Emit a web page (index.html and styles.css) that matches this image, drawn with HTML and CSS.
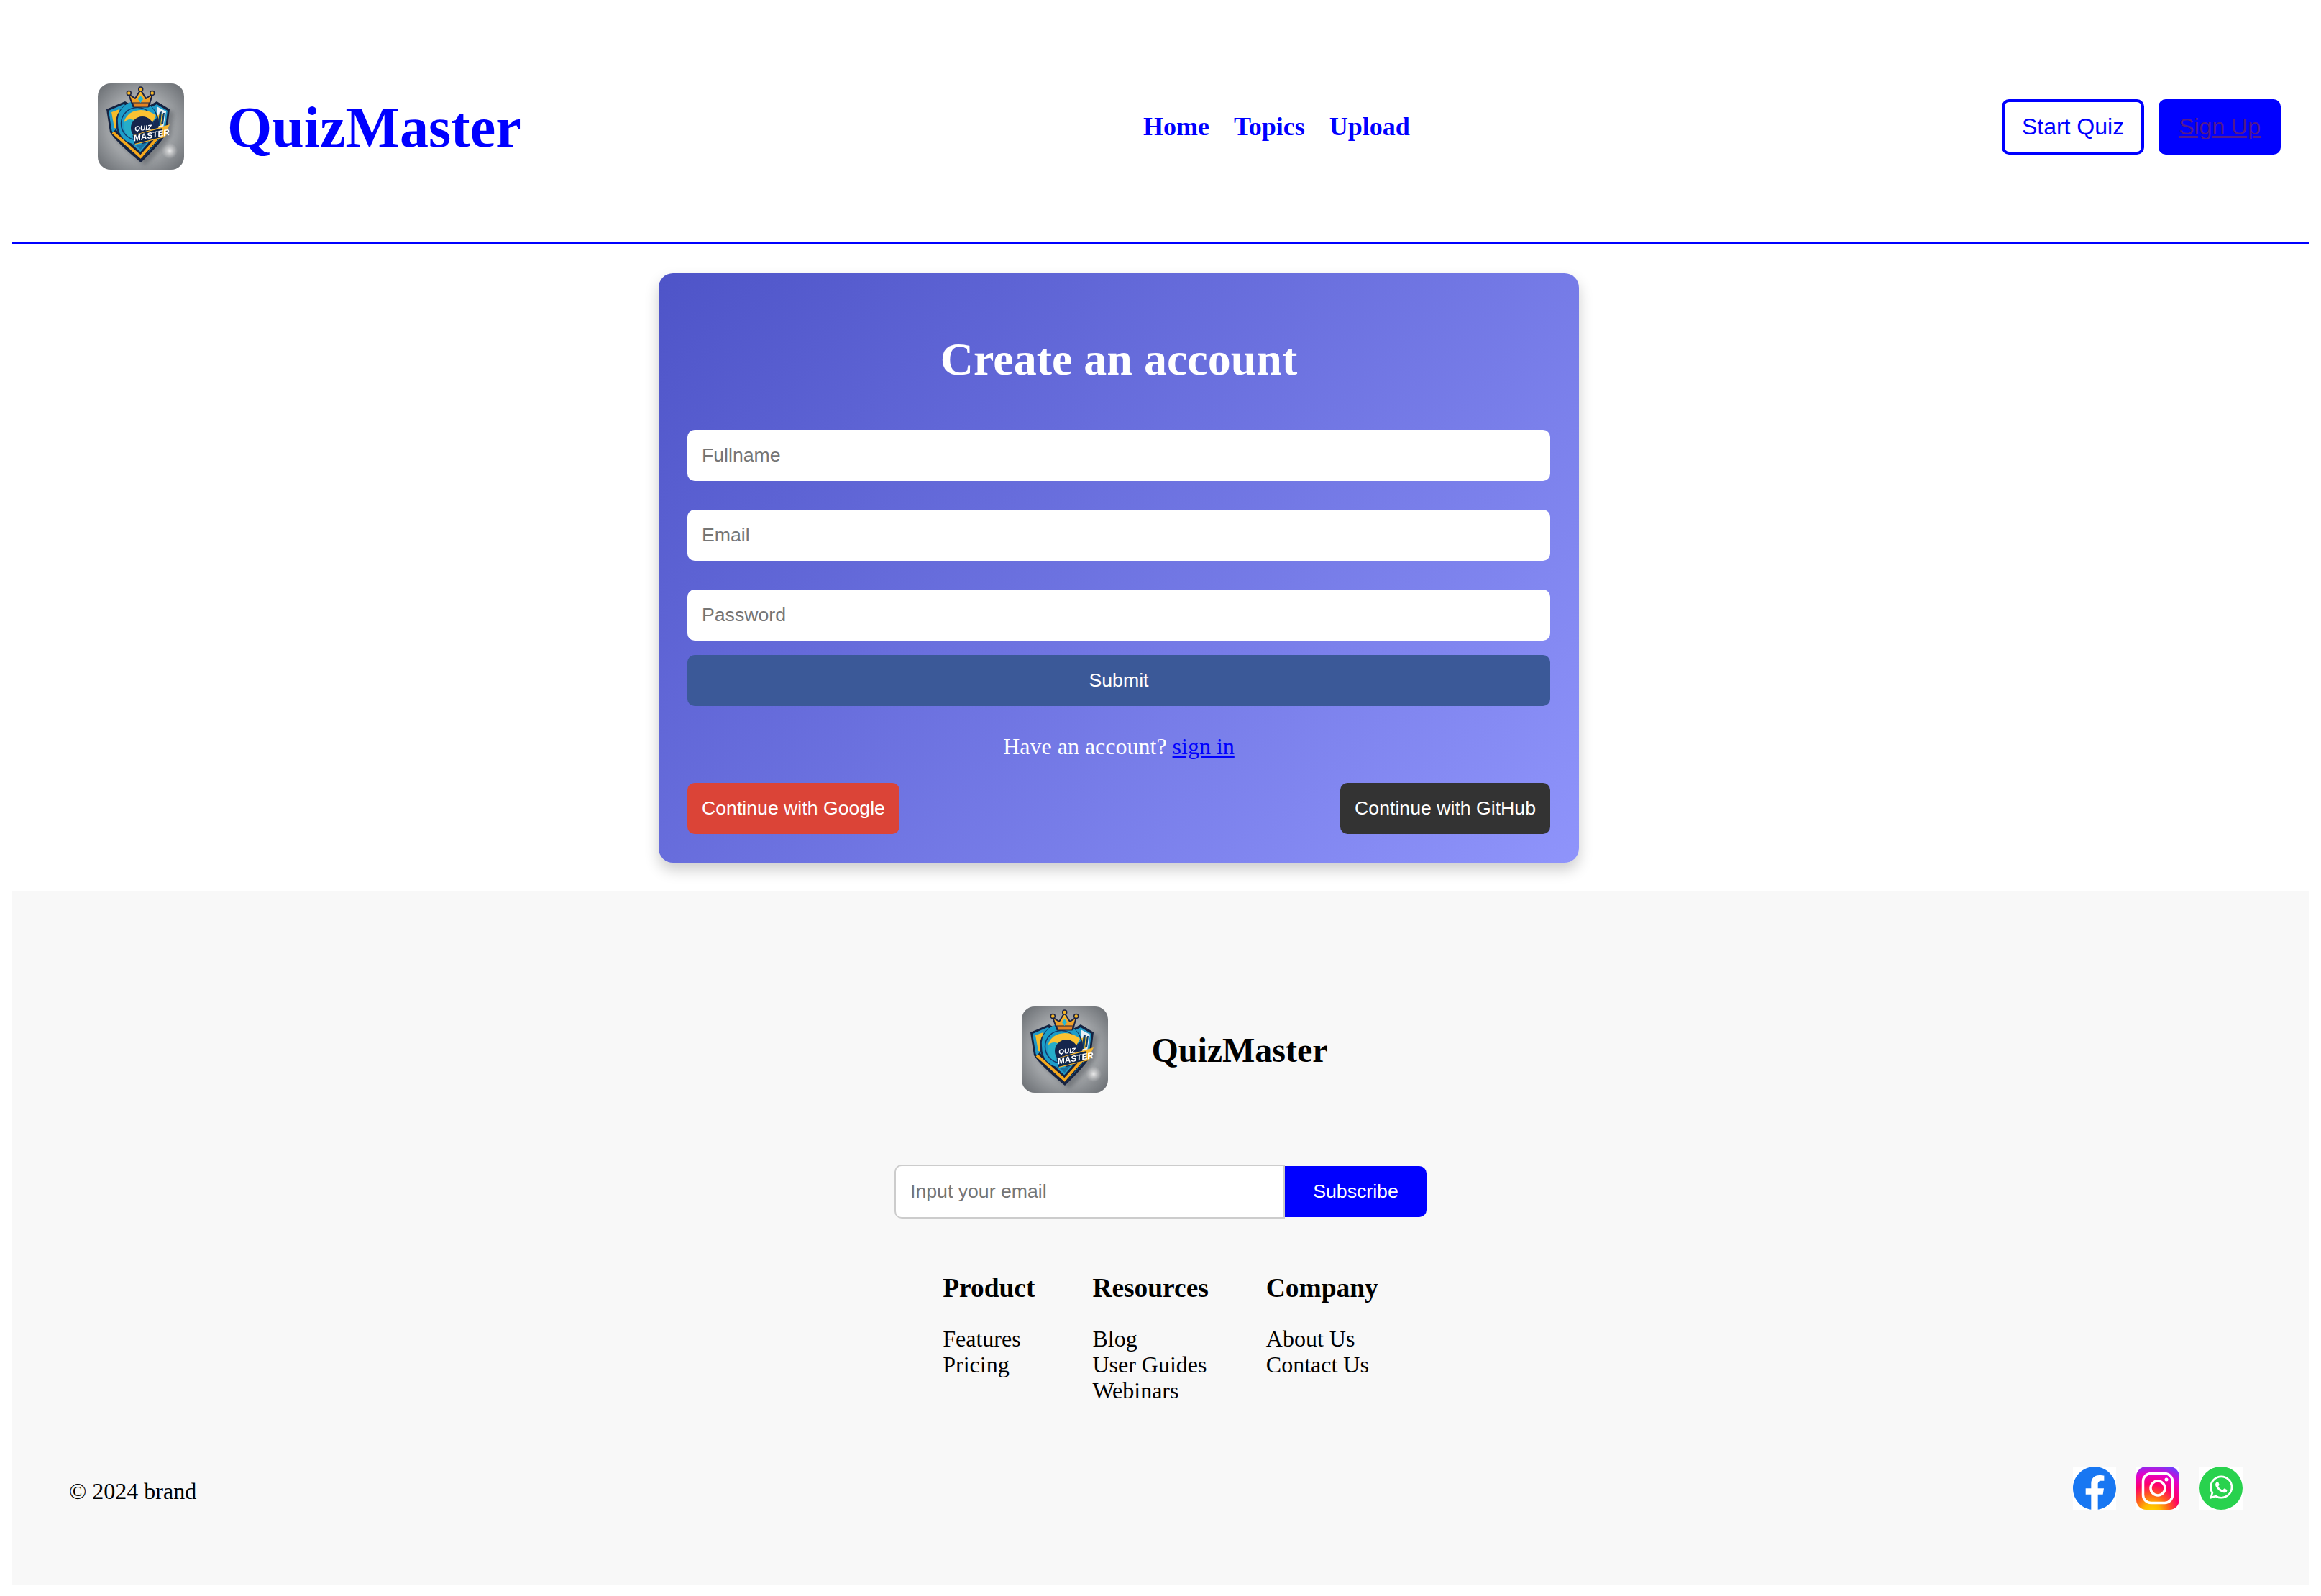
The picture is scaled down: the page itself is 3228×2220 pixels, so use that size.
FILE: index.html
```html
<!DOCTYPE html>
<html lang="en">
<head>
<meta charset="utf-8">
<title>QuizMaster</title>
<link rel="stylesheet" href="styles.css">
</head>
<body>
<header class="site-header">
  <div class="brand">
    <svg class="logo" viewBox="0 0 120 120" role="img" aria-label="QuizMaster logo">
      <defs>
        <radialGradient id="logoBg" cx="50%" cy="50%" r="70%">
          <stop offset="0" stop-color="#c9cbcd"/>
          <stop offset=".5" stop-color="#a6a9ac"/>
          <stop offset="1" stop-color="#65696e"/>
        </radialGradient>
        <radialGradient id="logoGlow">
          <stop offset="0" stop-color="#eee" stop-opacity=".95"/>
          <stop offset=".4" stop-color="#e6e6e6" stop-opacity=".55"/>
          <stop offset="1" stop-color="#ddd" stop-opacity="0"/>
        </radialGradient>
        <linearGradient id="logoCrown" x1="0" y1="0" x2="0" y2="1">
          <stop offset="0" stop-color="#fbc82f"/>
          <stop offset="1" stop-color="#ec8a24"/>
        </linearGradient>
        <filter id="logoSoft" x="-5%" y="-5%" width="110%" height="110%">
          <feGaussianBlur stdDeviation=".3"/>
        </filter>
        <filter id="logoShadow" x="-20%" y="-20%" width="140%" height="140%">
          <feGaussianBlur stdDeviation="3"/>
        </filter>
        <clipPath id="logoClip"><rect width="120" height="120" rx="18"/></clipPath>
      </defs>
      <g id="quizlogo" clip-path="url(#logoClip)">
        <rect width="120" height="120" fill="url(#logoBg)"/>
        <circle cx="100" cy="94" r="11" fill="url(#logoGlow)"/>
        <path d="M16 40 42 30 78 30 106 40 102 72Q94 88 66 114 30 88 22 72Z" fill="#4a4d52" opacity=".5" filter="url(#logoShadow)"/>
        <g filter="url(#logoSoft)">
          <path d="M12 36 38 25 50 32H70L82 25 100 36 96 68Q91 80 60 110 26 82 17 68Z" fill="#13213f"/>
          <path d="M15 38 36 29 52 36H68L82 29 97 38 93.500 66Q88 77 60 106 30 81 19.500 66Z" fill="#2098c6"/>
          <path d="M19 40 30 36 34 64 23 62Z" fill="#f6bc2c"/>
          <path d="M22 67 59.500 101 89 67" fill="none" stroke="#13213f" stroke-width="8"/>
          <path d="M21 68 59.500 102 90 68" fill="none" stroke="#f5a81f" stroke-width="4"/>
          <path d="M27 62 59.500 92 85 64 80 46H34Z" fill="#1b6f9f"/>
          <path d="M82 32 95 39 91 62 82 66Z" fill="#e9eff2"/>
          <path d="M83 44 92 42 90 58 82 60Z" fill="#f6c230"/>
          <path d="M86 40 89 39 87 59H83ZM91 41 93 41 91 57H88Z" fill="#0f3f6b"/>
          <circle cx="55" cy="55" r="30" fill="#132a53"/>
          <path d="M28 55A27 27 0 0 1 82 48L74 56 60 86Q28 84 28 55Z" fill="#1f9dc8"/>
          <circle cx="55" cy="56" r="22.500" fill="none" stroke="#14386a" stroke-width="1.500"/>
          <path d="M37 52Q42 38 60 37 72 37 81 45L74 58 44 58Q37 58 37 52Z" fill="#fbc230"/>
          <path d="M37 54Q42 48 50 51L46 76Q35 70 37 54Z" fill="#26adc9"/>
          <circle cx="62" cy="62" r="16" fill="#12264e"/>
          <text class="logo-quiz" x="51.500" y="66.500" transform="rotate(-5 51.500 66.500)">QUIZ</text>
          <path d="M49 72 100 57 95 67 98 68 93 75 52 85Z" fill="#f6b52d"/>
          <path d="M48.500 72.500 90 62 88 75 51 84Z" fill="#10254a"/>
          <text class="logo-master" x="50.500" y="80.500" transform="rotate(-10 50.500 80.500)">MASTER</text>
          <path d="M49 32 43 15 52 21 59.500 9 67 21 76 15 71 32Z" fill="url(#logoCrown)" stroke="#1b2442" stroke-width="2" stroke-linejoin="round"/>
          <path d="M48.500 27H71.500L70 33H50Z" fill="#e58424" stroke="#1b2442" stroke-width="1.200"/>
          <path d="M59.500 17 63 22 59.500 27 56 22Z" fill="#24b6d6"/>
          <circle cx="43.300" cy="13.500" r="3" fill="#f5b525" stroke="#1b2442" stroke-width="1.500"/>
          <circle cx="59.700" cy="8" r="3" fill="#f5b525" stroke="#1b2442" stroke-width="1.500"/>
          <circle cx="75.700" cy="13.500" r="3" fill="#f5b525" stroke="#1b2442" stroke-width="1.500"/>
        </g>
      </g>
    </svg>
    <h1 class="brand-name">QuizMaster</h1>
  </div>
  <nav class="main-nav">
    <a class="nav-link" href="#home">Home</a>
    <a class="nav-link" href="#topics">Topics</a>
    <a class="nav-link" href="#upload">Upload</a>
  </nav>
  <div class="header-actions">
    <button class="btn btn-outline" type="button">Start Quiz</button>
    <button class="btn btn-solid" type="button"><span class="visited-link">Sign Up</span></button>
  </div>
</header>

<main class="page-main">
  <section class="signup-card">
    <h2 class="signup-title">Create an account</h2>
    <form class="signup-form">
      <input class="field" type="text" placeholder="Fullname">
      <input class="field" type="email" placeholder="Email">
      <input class="field field-last" type="password" placeholder="Password">
      <button class="submit" type="button">Submit</button>
    </form>
    <p class="signin-note">Have an account? <a class="signin-link" href="#signin">sign in</a></p>
    <div class="oauth-row">
      <button class="oauth oauth-google" type="button">Continue with Google</button>
      <button class="oauth oauth-github" type="button">Continue with GitHub</button>
    </div>
  </section>
</main>

<footer class="site-footer">
  <div class="footer-brand">
    <svg class="logo" viewBox="0 0 120 120" role="img" aria-label="QuizMaster logo"><use href="#quizlogo"/></svg>
    <h2 class="footer-name">QuizMaster</h2>
  </div>
  <form class="subscribe">
    <input class="subscribe-input" type="email" placeholder="Input your email">
    <button class="subscribe-btn" type="button">Subscribe</button>
  </form>
  <div class="footer-cols">
    <div class="footer-col">
      <h3 class="col-title">Product</h3>
      <div class="col-item">Features</div>
      <div class="col-item">Pricing</div>
    </div>
    <div class="footer-col">
      <h3 class="col-title">Resources</h3>
      <div class="col-item">Blog</div>
      <div class="col-item">User Guides</div>
      <div class="col-item">Webinars</div>
    </div>
    <div class="footer-col">
      <h3 class="col-title">Company</h3>
      <div class="col-item">About Us</div>
      <div class="col-item">Contact Us</div>
    </div>
  </div>
  <div class="footer-bottom">
    <span class="copyright">© 2024 brand</span>
    <div class="socials">
      <svg class="social" viewBox="0 0 24 24" role="img" aria-label="Facebook">
        <rect width="24" height="24" fill="#fff"/>
        <path fill="#1877f2" d="M24 12.073c0-6.627-5.373-12-12-12s-12 5.373-12 12c0 5.990 4.388 10.954 10.125 11.854v-8.385H7.078v-3.470h3.047V9.430c0-3.007 1.792-4.669 4.533-4.669 1.312 0 2.686.235 2.686.235v2.953H15.830c-1.491 0-1.956.925-1.956 1.874v2.250h3.328l-.532 3.470h-2.796v8.385C19.612 23.027 24 18.062 24 12.073z"/>
      </svg>
      <svg class="social" viewBox="0 0 60 60" role="img" aria-label="Instagram">
        <defs>
          <radialGradient id="igGrad" cx="36%" cy="106%" r="112%">
            <stop offset="0" stop-color="#ffd600"/>
            <stop offset=".18" stop-color="#ffb800"/>
            <stop offset=".38" stop-color="#ff5a1f"/>
            <stop offset=".58" stop-color="#ff0069"/>
            <stop offset=".8" stop-color="#e600c8"/>
            <stop offset="1" stop-color="#7638fa"/>
          </radialGradient>
        </defs>
        <rect width="60" height="60" fill="#fff"/>
        <rect width="60" height="60" rx="14" fill="url(#igGrad)"/>
        <rect x="9.500" y="9.500" width="41" height="41" rx="11" fill="none" stroke="#fff" stroke-width="3.500"/>
        <circle cx="30" cy="30" r="10" fill="none" stroke="#fff" stroke-width="3.500"/>
        <circle cx="42" cy="18" r="2.500" fill="#fff"/>
      </svg>
      <svg class="social" viewBox="0 0 60 60" role="img" aria-label="WhatsApp">
        <rect width="60" height="60" fill="#fff"/>
        <circle cx="30" cy="30" r="30" fill="#29d24e"/>
        <path transform="translate(14 12.500) scale(1.350)" fill="#fff" d="M17.472 14.382c-.297-.149-1.758-.867-2.030-.967-.273-.099-.471-.148-.670.150-.197.297-.767.966-.940 1.164-.173.199-.347.223-.644.075-.297-.150-1.255-.463-2.390-1.475-.883-.788-1.480-1.761-1.653-2.059-.173-.297-.018-.458.130-.606.134-.133.298-.347.446-.520.149-.174.198-.298.298-.497.099-.198.050-.371-.025-.520-.075-.149-.669-1.612-.916-2.207-.242-.579-.487-.500-.669-.510-.173-.008-.371-.010-.570-.010-.198 0-.520.074-.792.372-.272.297-1.040 1.016-1.040 2.479 0 1.462 1.065 2.875 1.213 3.074.149.198 2.096 3.200 5.077 4.487.709.306 1.262.489 1.694.625.712.227 1.360.195 1.871.118.571-.085 1.758-.719 2.006-1.413.248-.694.248-1.289.173-1.413-.074-.124-.272-.198-.570-.347m-5.421 7.403h-.004a9.870 9.870 0 01-5.031-1.378l-.361-.214-3.741.982.998-3.648-.235-.374a9.860 9.860 0 01-1.510-5.260c.001-5.450 4.436-9.884 9.888-9.884 2.640 0 5.122 1.030 6.988 2.898a9.825 9.825 0 012.893 6.994c-.003 5.450-4.437 9.884-9.885 9.884m8.413-18.297A11.815 11.815 0 0012.050 0C5.495 0 .160 5.335.157 11.892c0 2.096.547 4.142 1.588 5.945L.057 24l6.305-1.654a11.882 11.882 0 005.683 1.448h.005c6.554 0 11.890-5.335 11.893-11.893a11.821 11.821 0 00-3.480-8.413z"/>
      </svg>
    </div>
  </div>
</footer>
</body>
</html>
```
FILE: styles.css
```css
* { box-sizing: border-box; }

body {
  margin: 16px;
  background: #fff;
  color: #000;
  font-family: "Liberation Serif", "Times New Roman", serif;
  font-size: 32px;
}

/* Header */
.site-header {
  display: flex;
  align-items: center;
  justify-content: space-between;
  padding: 100px 40px 100px 120px;
  border-bottom: 4px solid #00f;
}
.brand { display: flex; align-items: center; gap: 60px; padding-right: 42px; }
.logo { display: block; width: 120px; height: 120px; flex: none; }
.logo-quiz {
  font: italic 700 10px "Liberation Sans", Arial, sans-serif;
  fill: #fff;
}
.logo-master {
  font: italic 700 12px "Liberation Sans", Arial, sans-serif;
  fill: #fff;
}
.brand-name { margin: 2px 0 0; font-size: 80px; font-weight: 700; color: #00f; }
.main-nav { display: flex; gap: 34px; }
.nav-link { color: #00f; font-size: 36px; font-weight: 700; text-decoration: none; }
.header-actions { display: flex; gap: 20px; }
.btn {
  padding: 16px 24px;
  border: 4px solid #00f;
  border-radius: 10px;
  font: 32px "Liberation Sans", Arial, sans-serif;
}
.btn-outline { background: #fff; color: #00f; }
.btn-solid { background: #00f; }
.visited-link { color: #551a8b; text-decoration: underline; }

/* Sign-up card */
.page-main { display: flex; justify-content: center; padding: 40px 116px 40px 0; }
.signup-card {
  width: 1280px;
  padding: 40px;
  border-radius: 20px;
  background: linear-gradient(135deg, #4e54c8, #8f94fb);
  box-shadow: 0 10px 20px rgba(0, 0, 0, .2);
}
.signup-title {
  margin: 43px 0 61px;
  color: #fff;
  font-size: 64px;
  font-weight: 700;
  text-align: center;
}
.signup-form { display: flex; flex-direction: column; }
.field {
  width: 100%;
  margin-bottom: 40px;
  padding: 20px;
  border: 0;
  border-radius: 10px;
  background: #fff;
  font: 26.67px "Liberation Sans", Arial, sans-serif;
}
.field-last { margin-bottom: 20px; }
.submit, .oauth, .subscribe-btn {
  border: 0;
  color: #fff;
  font: 26.67px "Liberation Sans", Arial, sans-serif;
}
.submit { width: 100%; padding: 20px; border-radius: 10px; background: #3b5998; }
.signin-note { margin: 38px 0 32px; color: #fff; text-align: center; }
.signin-link { color: #00f; text-decoration: underline; }
.oauth-row { display: flex; justify-content: space-between; }
.oauth { padding: 20px; border-radius: 10px; }
.oauth-google { background: #db4437; }
.oauth-github { background: #333; }

/* Footer */
.site-footer {
  display: flex;
  flex-direction: column;
  align-items: center;
  padding: 160px 0 105px;
  background: #f8f8f8;
}
.footer-brand { display: flex; align-items: center; gap: 60px; padding-left: 40px; }
.footer-name { margin: 0; font-size: 48px; font-weight: 700; }
.subscribe { display: flex; align-items: center; margin-top: 100px; }
.subscribe-input {
  width: 543px;
  padding: 20px;
  border: 2px solid #ccc;
  border-radius: 10px 0 0 10px;
  background: #fff;
  font: 26.67px "Liberation Sans", Arial, sans-serif;
}
.subscribe-btn {
  width: 197px;
  padding: 20px 0;
  border-radius: 0 10px 10px 0;
  background: #00f;
}
.footer-cols { display: flex; gap: 80px; margin-top: 75px; }
.col-title { margin: 0 0 31px; font-size: 37.44px; font-weight: 700; }
.col-item { line-height: 36px; }
.footer-bottom {
  display: flex;
  align-items: center;
  justify-content: space-between;
  align-self: stretch;
  margin-top: 88px;
  padding: 0 93px 0 80px;
}
.copyright { margin-top: 8px; }
.socials { display: flex; gap: 28px; }
.social { display: block; width: 60px; height: 60px; }
```
